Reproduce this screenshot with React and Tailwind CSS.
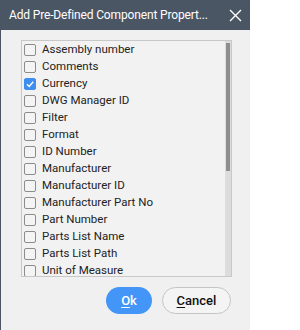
import React, { useState } from 'react';

const fields = [
  'Assembly number',
  'Comments',
  'Currency',
  'DWG Manager ID',
  'Filter',
  'Format',
  'ID Number',
  'Manufacturer',
  'Manufacturer ID',
  'Manufacturer Part No',
  'Part Number',
  'Parts List Name',
  'Parts List Path',
  'Unit of Measure',
];

const App = () => {
  const [checked, setChecked] = useState({ Currency: true });

  const toggle = (name) => {
    setChecked({ ...checked, [name]: !checked[name] });
  };

  return (
    <div className="w-[300px] h-[330px] bg-white font-['Roboto',sans-serif]">
      <div className="w-[250px] h-[330px] flex flex-col bg-[#f0f0f0] border-l border-[#4b5563]">
        <div className="h-[30px] bg-[#4b5665] flex items-center justify-between pl-2 pr-[8px] text-white">
          <span className="text-[12px] tracking-[-0.15px] whitespace-nowrap">Add Pre-Defined Component Propert...</span>
          <svg width="13" height="13" viewBox="0 0 13 13" className="shrink-0">
            <path d="M1 1 L12 12 M12 1 L1 12" stroke="white" strokeWidth="1.4" />
          </svg>
        </div>
        <div className="ml-[20px] mt-[10px] w-[211px] h-[237px] border border-[#c8c8c8] bg-[#f2f2f2] flex overflow-hidden">
          <div className="flex-1 flex flex-col">
            {fields.map((name) => (
              <label
                key={name}
                className="h-[17px] flex items-center gap-[6px] pl-[2px] shrink-0 cursor-pointer"
              >
                <span
                  onClick={() => toggle(name)}
                  className={`w-[12px] h-[12px] rounded-[2px] flex items-center justify-center border ${
                    checked[name] ? 'bg-[#3e8ef0] border-[#3e8ef0]' : 'bg-[#f4f4f4] border-[#8c8c8c]'
                  }`}
                >
                  {checked[name] && (
                    <svg width="10" height="10" viewBox="0 0 10 10">
                      <path d="M2 5.2 L4.2 7.4 L8.2 2.8" stroke="white" strokeWidth="1.4" fill="none" />
                    </svg>
                  )}
                </span>
                <span className="text-[11.5px] text-[#222]">{name}</span>
              </label>
            ))}
          </div>
          <div className="w-[6px] bg-[#dcdcdc] flex flex-col">
            <div className="h-[128px] mt-[2px] mx-[1px] bg-[#8e8e8e]" />
          </div>
        </div>
        <div className="flex justify-end gap-[10px] pr-[19px] mt-[10px]">
          <button className="w-[46px] h-[27px] rounded-full bg-[#4396f7] text-white text-[13px] font-medium">
            <span className="underline underline-offset-2">O</span>k
          </button>
          <button className="w-[69px] h-[27px] rounded-full border border-[#c4c4c4] bg-[#f4f4f4] text-[#111] text-[13px] font-medium">
            <span className="underline underline-offset-2">C</span>ancel
          </button>
        </div>
      </div>
    </div>
  );
};

export default App;
